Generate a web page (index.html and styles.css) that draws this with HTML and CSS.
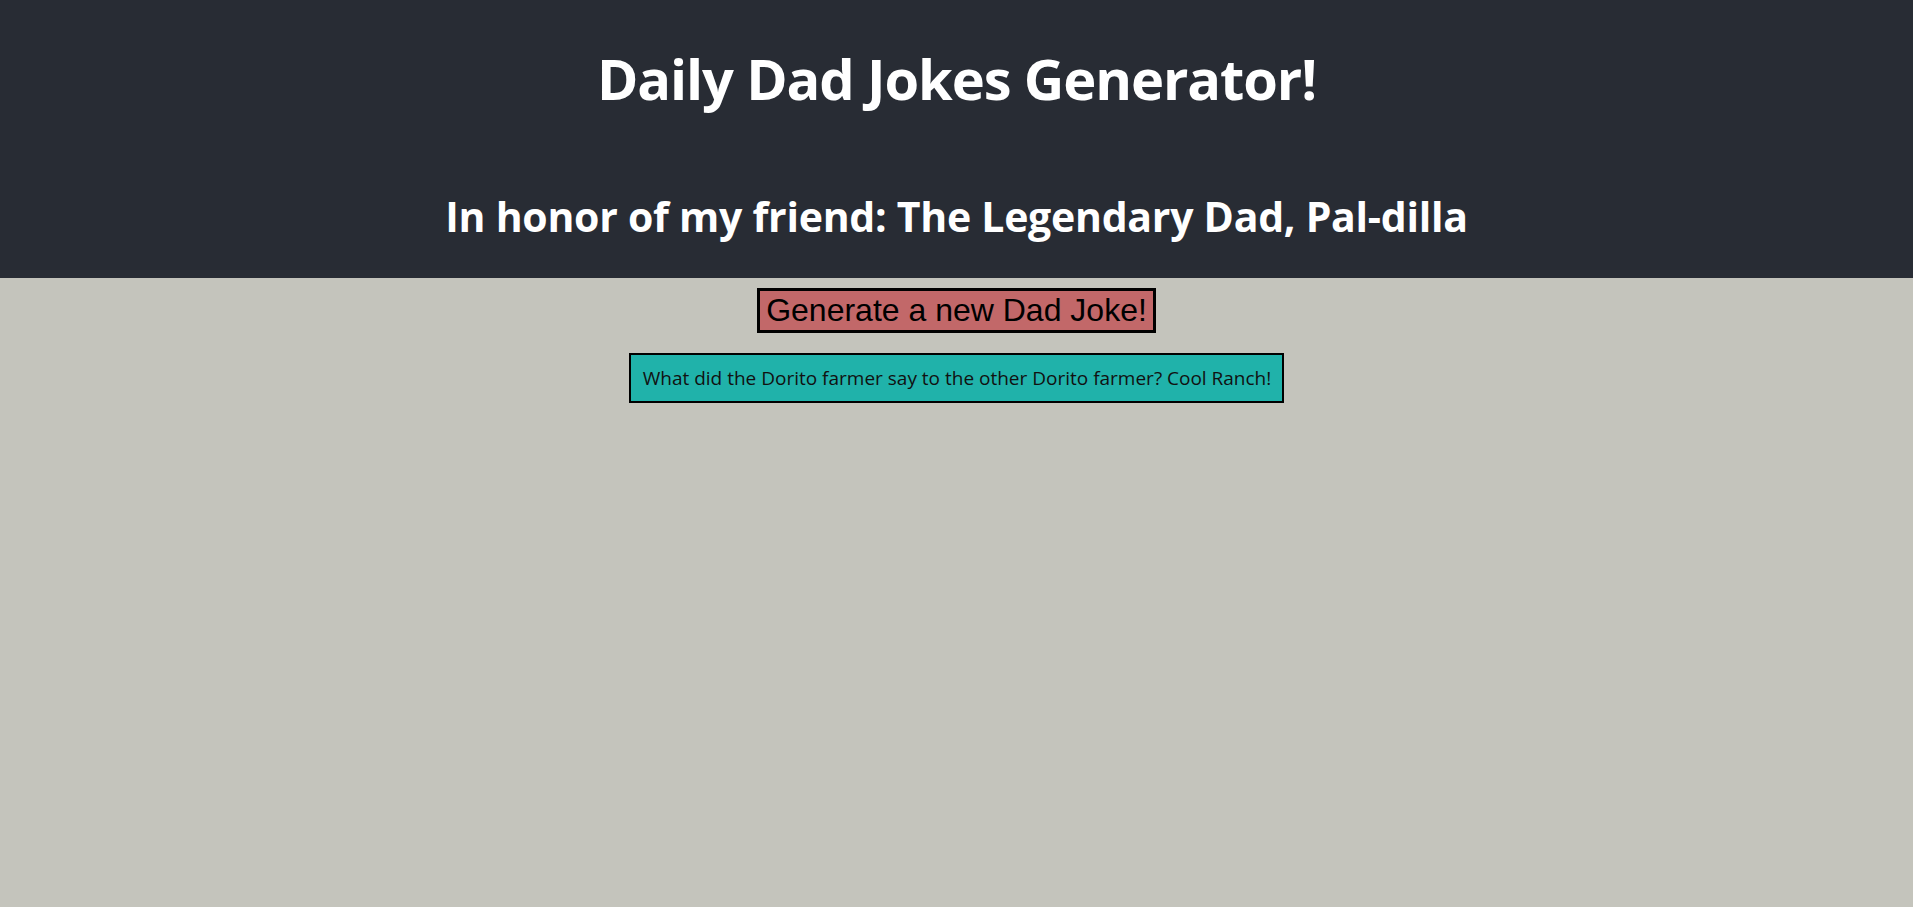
FILE: index.html
```html
<!DOCTYPE html>
<html lang="en">
<head>
<meta charset="utf-8">
<title>Daily Dad Jokes Generator!</title>
<link rel="stylesheet" href="styles.css">
</head>
<body>
<div class="app">
  <header class="app-header">
    <h1 class="title">Daily Dad Jokes Generator!</h1>
    <h2 class="subtitle">In honor of my friend: The Legendary Dad, Pal-dilla</h2>
  </header>
  <main class="content">
    <button class="joke-button" type="button">Generate a new Dad Joke!</button>
    <div class="joke-box">What did the Dorito farmer say to the other Dorito farmer? Cool Ranch!</div>
  </main>
</div>
</body>
</html>
```

FILE: styles.css
```css
html, body {
  margin: 0;
  padding: 0;
  height: 100%;
}

body {
  background: #c4c4bc;
  font-family: "Open Sans", "Noto Sans", sans-serif;
}

.app {
  min-height: 100%;
  text-align: center;
}

.app-header {
  background: #282c34;
  color: #ffffff;
  height: 278px;
  box-sizing: border-box;
  padding-top: 40px;
  display: flex;
  flex-direction: column;
  align-items: center;
}

.title {
  margin: 0;
  font-size: 56px;
  line-height: 76px;
  font-weight: 700;
  letter-spacing: -1.1px;
}

.subtitle {
  margin: 72px 0 0;
  font-size: 41px;
  line-height: 56px;
  font-weight: 700;
  letter-spacing: -0.27px;
}

.content {
  display: flex;
  flex-direction: column;
  align-items: center;
  padding-top: 10px;
  gap: 20px;
}

.joke-button {
  font-family: "Liberation Sans", Arial, sans-serif;
  font-size: 32px;
  line-height: 37px;
  color: #000000;
  background: #c26869;
  border: 3px solid #000000;
  padding: 1px 6px;
  margin: 0;
  border-radius: 0;
}

.joke-box {
  background: #20b2aa;
  border: 2px solid #000000;
  padding: 10px 11px 10px 12px;
  font-size: 19px;
  line-height: 26px;
  color: #111111;
}
```
